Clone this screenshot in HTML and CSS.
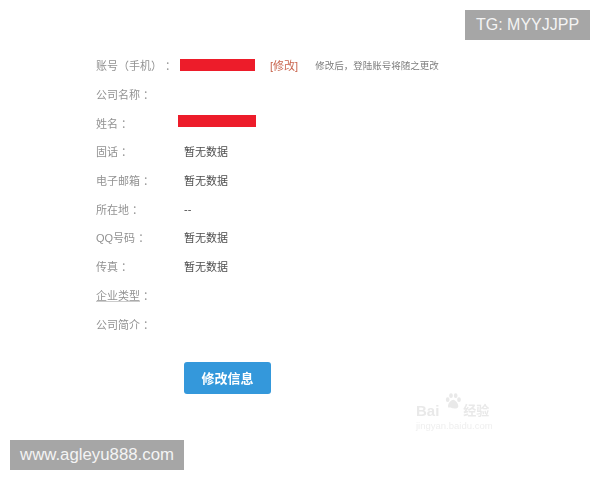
FILE: index.html
```html
<!DOCTYPE html>
<html lang="zh">
<head>
<meta charset="utf-8">
<title>账号信息</title>
<link rel="stylesheet" href="styles.css">
</head>
<body>
<div class="page">
  <main class="form">
    <div class="row"><span class="label">账号（手机） ：</span><span class="bar bar-a"></span><span class="edit">[修改]</span><span class="hint">修改后，登陆账号将随之更改</span></div>
    <div class="row"><span class="label">公司名称 ：</span></div>
    <div class="row"><span class="label">姓名 ：</span><span class="bar bar-b"></span></div>
    <div class="row"><span class="label">固话 ：</span><span class="value">暂无数据</span></div>
    <div class="row"><span class="label">电子邮箱 ：</span><span class="value">暂无数据</span></div>
    <div class="row"><span class="label">所在地 ：</span><span class="value">--</span></div>
    <div class="row"><span class="label">QQ号码 ：</span><span class="value">暂无数据</span></div>
    <div class="row"><span class="label">传真 ：</span><span class="value">暂无数据</span></div>
    <div class="row"><span class="label"><span class="under">企业类型</span> ：</span></div>
    <div class="row"><span class="label">公司简介 ：</span></div>
    <button class="submit">修改信息</button>
  </main>
  <div class="watermark">
    <svg class="paw" width="16" height="16" viewBox="0 0 24 24"><g fill="#e9e9e9"><ellipse cx="4" cy="10" rx="2.800" ry="3.500"/><ellipse cx="9" cy="4" rx="2.800" ry="3.500"/><ellipse cx="16" cy="4" rx="2.800" ry="3.500"/><ellipse cx="21" cy="10" rx="2.800" ry="3.500"/><path d="M12.500 10c3 0 7.500 6 7.500 9.500s-4 4.500-7.500 3.500-8 1-8-3.500 5-9.500 8-9.500z"/></g></svg>
    <div class="wm-main">Bai<span class="wm-gap"></span><span class="wm-cn">经验</span></div>
    <div class="wm-sub">jingyan.baidu.com</div>
  </div>
  <div class="badge badge-tg">TG: MYYJJPP</div>
  <div class="badge badge-site">www.agleyu888.com</div>
</div>
</body>
</html>
```
FILE: styles.css
```css
html, body {
  margin: 0;
  padding: 0;
  background: #fff;
}
.page {
  position: relative;
  width: 600px;
  height: 480px;
  overflow: hidden;
  font-family: "Liberation Sans", "Noto Sans CJK SC", sans-serif;
}
.form {
  display: flex;
  flex-direction: column;
  align-items: flex-start;
  padding: 51px 0 0 96px;
}
.row {
  display: flex;
  align-items: center;
  height: 28.7px;
  font-size: 11px;
  color: #929292;
}
.label {
  width: 88px;
  flex: none;
  white-space: pre;
  filter: blur(0.4px);
}
.under {
  text-decoration: underline;
  text-decoration-color: #cccccc;
}
.value {
  color: #4d4d4d;
  filter: blur(0.4px);
}
.bar {
  display: block;
  height: 12px;
  background: #ed1c2a;
  filter: blur(0.3px);
}
.bar-a {
  width: 75px;
  margin-left: -4px;
  margin-top: -1px;
}
.bar-b {
  width: 78px;
  margin-left: -6px;
  margin-top: -4px;
}
.edit {
  margin-left: 15px;
  color: #c9664f;
  filter: blur(0.4px);
}
.hint {
  margin-left: 17px;
  font-size: 9.500px;
  color: #7d7d7d;
  filter: blur(0.4px);
}
.submit {
  margin: 24px 0 0 88px;
  width: 87px;
  height: 32px;
  padding: 0;
  border: 0;
  border-radius: 3px;
  background: #3498db;
  color: #fff;
  font-family: inherit;
  font-size: 13px;
  font-weight: 700;
  filter: blur(0.4px);
}
.badge {
  position: absolute;
  height: 30px;
  line-height: 30px;
  text-align: center;
  background: #a6a6a6;
  color: #f4f4f4;
  font-family: "Liberation Sans", sans-serif;
  font-size: 16px;
}
.badge-tg {
  top: 10px;
  right: 10px;
  width: 125px;
}
.badge-site {
  left: 10px;
  top: 440px;
  width: 174px;
  font-size: 16.800px;
}
.watermark {
  position: absolute;
  left: 415px;
  top: 392px;
  width: 80px;
  height: 40px;
  color: #e9e9e9;
  filter: blur(0.7px);
}
.paw {
  position: absolute;
  left: 30px;
  top: 1px;
}
.wm-main {
  position: absolute;
  top: 10px;
  left: 1px;
  font-size: 15px;
  font-weight: 700;
  line-height: 18px;
  white-space: nowrap;
  display: flex;
}
.wm-gap {
  width: 24px;
}
.wm-cn {
  font-size: 13px;
}
.wm-sub {
  position: absolute;
  top: 28px;
  left: 1px;
  font-size: 9.500px;
  line-height: 11px;
  white-space: nowrap;
  color: #efefef;
}
```
